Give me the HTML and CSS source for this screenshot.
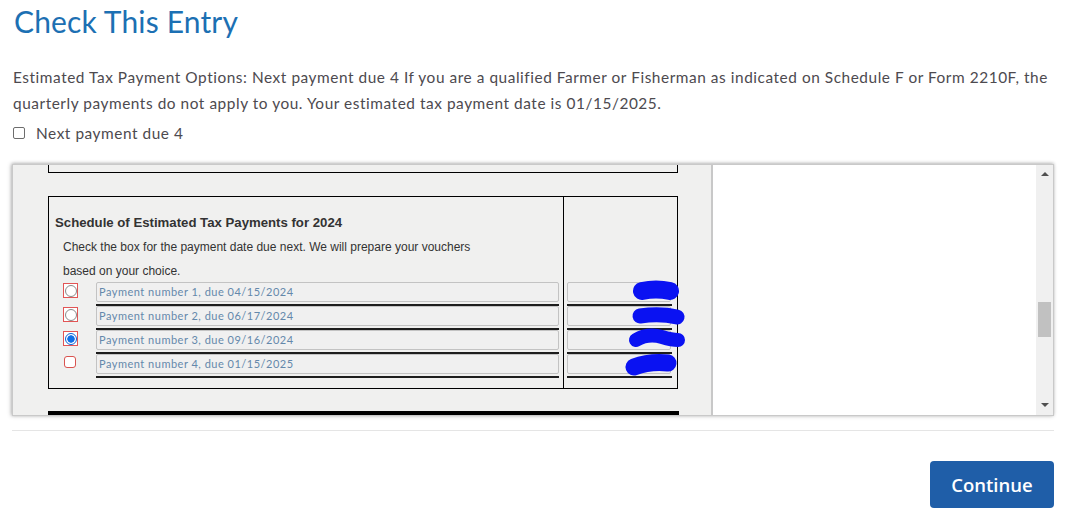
FILE: index.html
```html
<!DOCTYPE html>
<html lang="en">
<head>
<meta charset="utf-8">
<title>Check This Entry</title>
<link rel="stylesheet" href="styles.css">
</head>
<body>
<main class="page">
  <h1 class="title">Check This Entry</h1>
  <p class="intro">Estimated Tax Payment Options: Next payment due 4 If you are a qualified Farmer or Fisherman as indicated on Schedule F or Form 2210F, the quarterly payments do not apply to you. Your estimated tax payment date is 01/15/2025.</p>
  <label class="check"><span class="check-box"></span><span>Next payment due 4</span></label>

  <div class="frame">
    <div class="form-pane">
      <div class="box-top"></div>
      <div class="schedule">
        <div class="sched-main">
          <h2 class="sched-title">Schedule of Estimated Tax Payments for 2024</h2>
          <p class="sched-text">Check the box for the payment date due next. We will prepare your vouchers<br>based on your choice.</p>
          <div class="rows">
            <div class="row"><span class="radio"><span class="dot"></span></span><div class="field-wrap"><div class="field">Payment number 1, due 04/15/2024</div></div></div>
            <div class="row"><span class="radio"><span class="dot"></span></span><div class="field-wrap"><div class="field">Payment number 2, due 06/17/2024</div></div></div>
            <div class="row"><span class="radio"><span class="dot on"></span></span><div class="field-wrap"><div class="field">Payment number 3, due 09/16/2024</div></div></div>
            <div class="row"><span class="radio plain"></span><div class="field-wrap"><div class="field">Payment number 4, due 01/15/2025</div></div></div>
          </div>
        </div>
        <div class="sched-side">
          <div class="side-wrap"><div class="field"></div></div>
          <div class="side-wrap"><div class="field"></div></div>
          <div class="side-wrap"><div class="field"></div></div>
          <div class="side-wrap"><div class="field"></div></div>
        </div>
        <svg class="scribble" width="70" height="100" viewBox="0 0 70 100" aria-hidden="true">
          <g fill="none" stroke="#0a12f2" stroke-linecap="round" stroke-linejoin="round">
            <path d="M22 11 Q36 8 50 11" stroke-width="18"/>
            <path d="M20 36 Q40 33 57 37" stroke-width="15"/>
            <path d="M16 60 Q28 53 42 57 Q52 60 58 60" stroke-width="14"/>
            <path d="M14 87 Q30 81 48 83" stroke-width="17"/>
          </g>
        </svg>
      </div>
      <div class="thick-bar"></div>
    </div>
    <div class="blank-pane"></div>
    <div class="scrollbar">
      <span class="arrow up"></span>
      <span class="thumb"></span>
      <span class="arrow down"></span>
    </div>
  </div>

  <hr class="rule">
  <div class="actions"><button class="continue" type="button">Continue</button></div>
</main>
</body>
</html>
```

FILE: styles.css
```css
* { box-sizing: border-box; }

body {
  margin: 0;
  background: #fff;
  font-family: "Lato", "Open Sans", sans-serif;
  color: #4d4a4f;
}

.page {
  padding: 0 13px 0 12px;
}

.title {
  margin: 0;
  padding: 3px 0 0 2px;
  font-size: 30px;
  line-height: 36px;
  font-weight: 400;
  color: #1c70b3;
  letter-spacing: 0.15px;
}

.intro {
  margin: 25px 0 0 1px;
  font-size: 15.4px;
  line-height: 26px;
  letter-spacing: 0.55px;
}

.check {
  display: flex;
  align-items: center;
  gap: 11px;
  margin: 6px 0 0 1px;
  font-size: 15.4px;
  line-height: 22px;
  letter-spacing: 0.55px;
}

.check-box {
  width: 12px;
  height: 12px;
  border: 1px solid #6d6d6d;
  border-radius: 2px;
  background: #fff;
}

.frame {
  display: flex;
  margin-top: 20px;
  height: 252px;
  border: 1px solid #c9c9c9;
  box-shadow: -1px 0 4px rgba(0,0,0,0.25), 0 -1px 3px rgba(0,0,0,0.15);
  overflow: hidden;
}

.form-pane {
  width: 700px;
  flex: none;
  background: #f0f0ef;
  border-right: 2px solid #c8c8c8;
  padding-left: 35px;
  font-family: "Liberation Sans", Arial, sans-serif;
  color: #333;
}

.box-top {
  width: 630px;
  height: 8px;
  border: 1px solid #000;
  border-top: 0;
}

.schedule {
  position: relative;
  display: flex;
  width: 630px;
  margin-top: 23px;
  border: 1px solid #000;
}

.sched-main {
  width: 515px;
  border-right: 1px solid #000;
  padding: 18px 0 10px 6px;
}

.sched-title {
  margin: 0;
  font-size: 13.2px;
  line-height: 16px;
  font-weight: 700;
  color: #333;
}

.sched-text {
  margin: 4px 0 0 8px;
  font-size: 12px;
  line-height: 24px;
  color: #333;
}

.rows {
  margin-top: -1px;
  padding-left: 8px;
}

.row {
  display: flex;
  height: 24px;
}

.radio {
  width: 15px;
  height: 15px;
  margin-top: 1px;
  border: 1px solid #e25555;
  background: #fff;
  display: flex;
  align-items: center;
  justify-content: center;
}

.dot {
  width: 12px;
  height: 12px;
  border-radius: 50%;
  border: 1px solid #8a8a8a;
  background: #fff;
}

.dot.on {
  border: 1px solid #0b63d6;
  background: radial-gradient(circle, #0f6fe6 0 3.4px, #fff 4px);
}

.radio.plain {
  width: 12px;
  height: 12px;
  margin: 2px 2px 0 1px;
  border-radius: 3px;
  border-color: #d9534f;
}

.field-wrap {
  margin-left: 18px;
  width: 463px;
  padding-bottom: 2px;
  border-bottom: 2px solid #1d1d1d;
}

.field {
  height: 20px;
  border: 1px solid #c3c3c3;
  border-radius: 2px;
  background: #f0f0f0;
  padding-left: 2px;
  font-family: "Lato", "Open Sans", sans-serif;
  font-size: 11px;
  line-height: 18px;
  letter-spacing: 0.5px;
  color: #6488ab;
}

.sched-side {
  width: 113px;
  padding-top: 85px;
}

.side-wrap {
  margin-left: 3px;
  width: 105px;
  padding-bottom: 2px;
  border-bottom: 2px solid #1d1d1d;
}

.side-wrap .field {
  width: 104px;
}

.scribble {
  position: absolute;
  left: 571px;
  top: 83px;
}

.thick-bar {
  width: 631px;
  height: 6px;
  margin-top: 22px;
  background: #000;
}

.blank-pane {
  flex: 1;
  background: #fff;
}

.scrollbar {
  position: relative;
  width: 17px;
  flex: none;
  background: #f0f0f0;
}

.thumb {
  position: absolute;
  left: 2px;
  top: 137px;
  width: 13px;
  height: 35px;
  background: #c1c1c1;
}

.arrow {
  position: absolute;
  left: 5px;
  width: 0;
  height: 0;
  border-left: 4px solid transparent;
  border-right: 4px solid transparent;
}

.arrow.up {
  top: 7px;
  border-bottom: 4px solid #505050;
}

.arrow.down {
  bottom: 8px;
  border-top: 4px solid #505050;
}

.rule {
  margin: 14px 0 0 0;
  border: 0;
  border-top: 1px solid #e5e5e5;
}

.actions {
  display: flex;
  justify-content: flex-end;
  padding-top: 30px;
}

.continue {
  width: 124px;
  height: 47px;
  border: 0;
  border-radius: 4px;
  background: #1f5ea8;
  color: #fff;
  font-family: "Open Sans", "Lato", sans-serif;
  font-size: 18.5px;
  font-weight: 600;
}
```
